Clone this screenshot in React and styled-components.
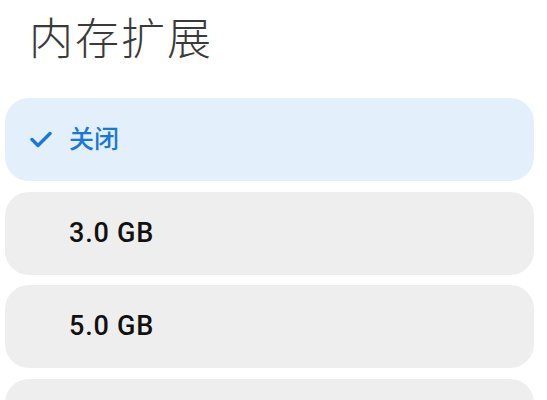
import React from "react";
import styled, { createGlobalStyle } from "styled-components";

const Global = createGlobalStyle`
  html, body { margin: 0; padding: 0; background: #ffffff; }
  body { font-family: "Noto Sans CJK SC", "Noto Sans", sans-serif; }
`;

const Page = styled.div`
  display: flex;
  flex-direction: column;
  padding: 0 13px 0 5px;
  height: 400px;
  overflow: hidden;
`;

const Title = styled.h1`
  flex-shrink: 0;
  margin: 0;
  padding: 6px 0 0 24px;
  height: 98px;
  box-sizing: border-box;
  font-family: "Noto Sans CJK SC", sans-serif;
  font-weight: 300;
  font-size: 44px;
  line-height: 60px;
  letter-spacing: 2px;
  color: #3a3a3a;
`;

const List = styled.div`
  display: flex;
  flex-direction: column;
  gap: 10.5px;
`;

const Option = styled.div`
  display: flex;
  align-items: center;
  flex-shrink: 0;
  height: 83px;
  border-radius: 24px;
  padding-left: 25px;
  background: ${(p) => (p.$selected ? "#e3f0fc" : "#eeeeee")};
  color: ${(p) => (p.$selected ? "#1a78d6" : "#111111")};
`;

const CheckSlot = styled.span`
  display: flex;
  align-items: center;
  width: 39px;
`;

const Label = styled.span`
  font-family: Roboto, "Noto Sans CJK SC", sans-serif;
  font-size: ${(p) => (p.$cjk ? "25px" : "27px")};
  font-weight: 500;
  letter-spacing: ${(p) => (p.$cjk ? "0" : "0.8px")};
  line-height: 1;
`;

const Check = () => (
  <svg width="22" height="17" viewBox="0 0 22 17">
    <path d="M2 8.5 L8 14.5 L20 2.5" fill="none" stroke="#1a78d6" strokeWidth="3.4" strokeLinecap="round" strokeLinejoin="round" />
  </svg>
);

const options = [
  { id: "off", label: "关闭", selected: true, cjk: true },
  { id: "3", label: "3.0 GB" },
  { id: "5", label: "5.0 GB" },
  { id: "more", label: null },
];

export default function App() {
  return (
    <>
      <Global />
      <Page>
        <Title>内存扩展</Title>
        <List>
          {options.map((o) => (
            <Option key={o.id} $selected={o.selected}>
              <CheckSlot>{o.selected && <Check />}</CheckSlot>
              {o.label && <Label $cjk={o.cjk}>{o.label}</Label>}
            </Option>
          ))}
        </List>
      </Page>
    </>
  );
}
